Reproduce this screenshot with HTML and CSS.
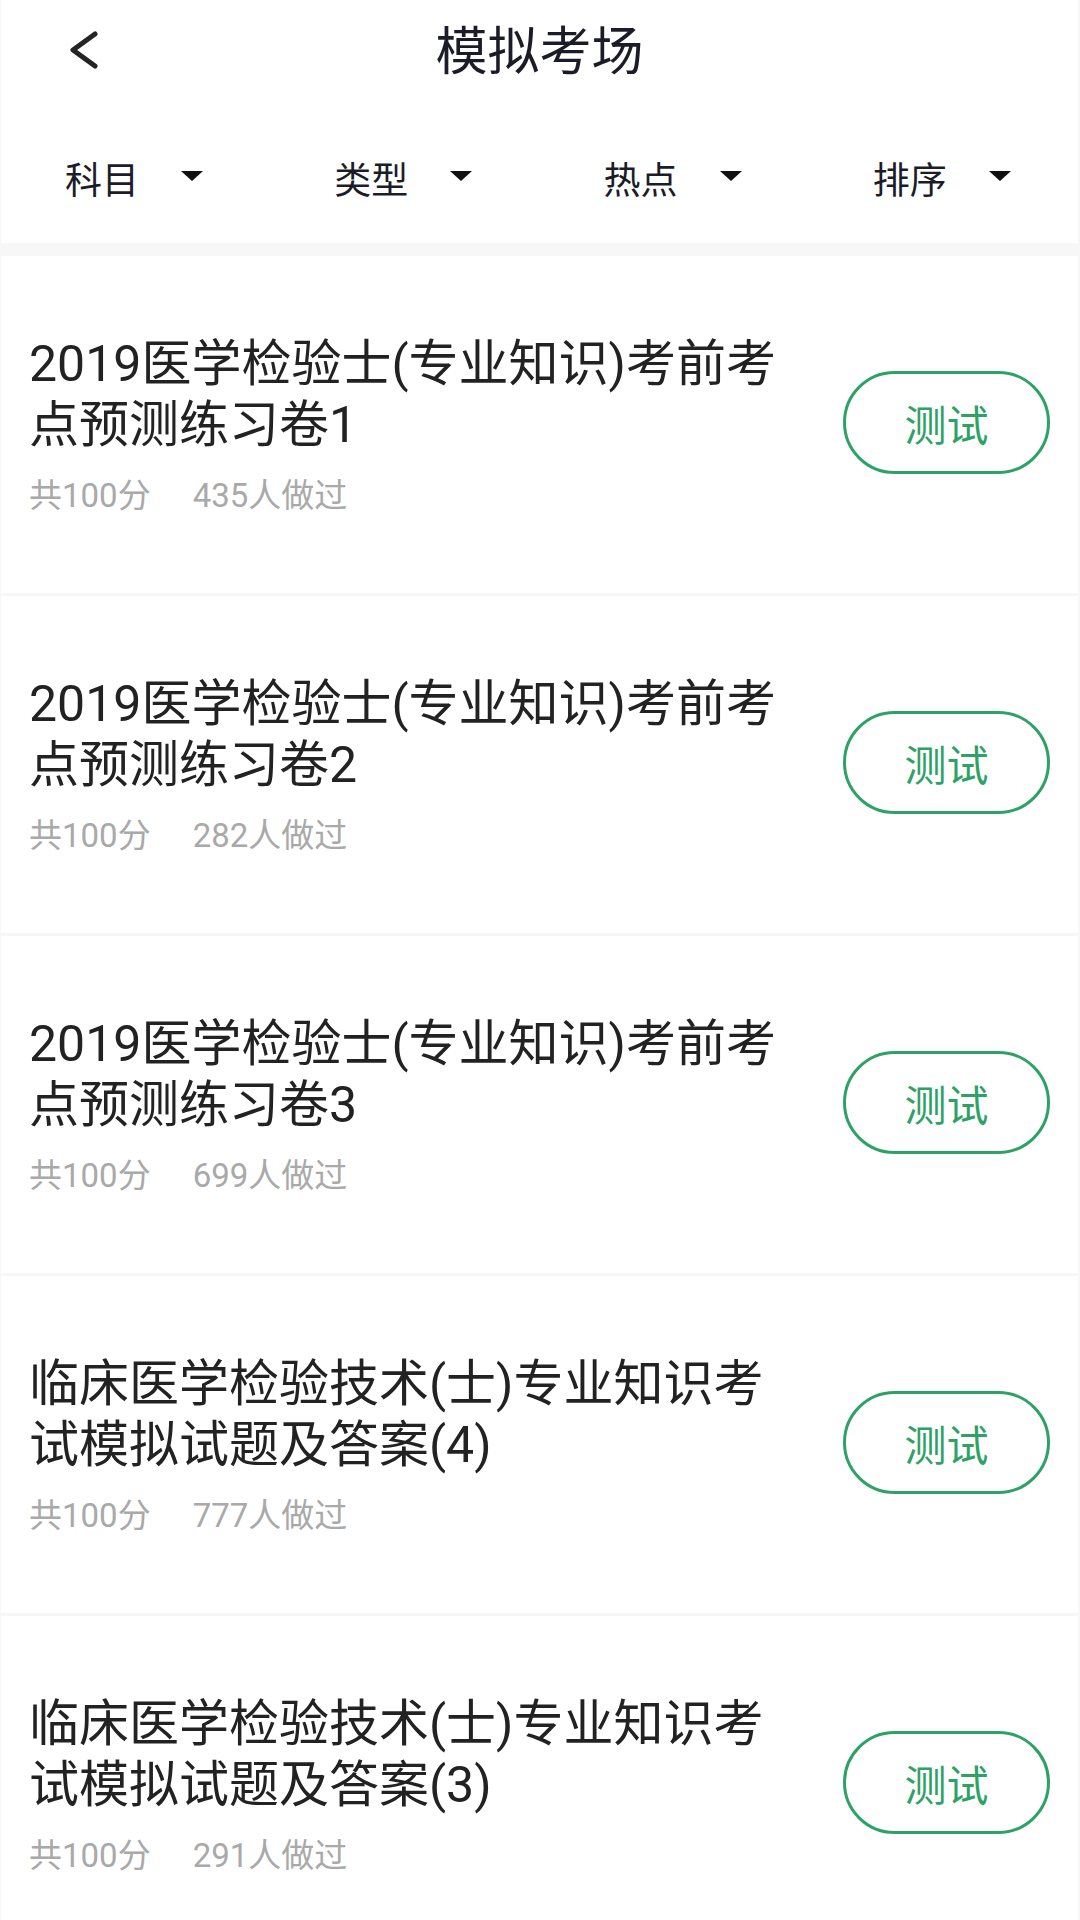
FILE: index.html
```html
<!DOCTYPE html>
<html lang="zh-CN">

<head>
    <meta charset="UTF-8">
    <meta name="viewport" content="width=device-width, initial-scale=1.0">
    <title>模拟考场</title>
    <link rel="stylesheet" href="styles.css">
</head>

<body>
    <div class="page">
        <div class="header">
            <div class="nav">
                <div class="back">
                    <svg width="40" height="50" viewBox="0 0 40 50">
                        <polyline points="31,6 9,22 31,38" fill="none" stroke="#242424" stroke-width="5"
                            stroke-linecap="round" stroke-linejoin="round" />
                    </svg>
                </div>
                <h1 class="title">模拟考场</h1>
                <div></div>
            </div>

            <div class="filters">
                <div class="filter"><span>科目</span><i class="arrow"></i></div>
                <div class="filter"><span>类型</span><i class="arrow"></i></div>
                <div class="filter"><span>热点</span><i class="arrow"></i></div>
                <div class="filter"><span>排序</span><i class="arrow"></i></div>
            </div>
        </div>

        <div class="list">
            <div class="exam">
                <div class="exam-info">
                    <p class="exam-name">2019医学检验士(专业知识)考前考点预测练习卷1</p>
                    <div class="exam-meta"><span>共100分</span><span>435人做过</span></div>
                </div>
                <button class="exam-btn">测试</button>
            </div>

            <div class="exam">
                <div class="exam-info">
                    <p class="exam-name">2019医学检验士(专业知识)考前考点预测练习卷2</p>
                    <div class="exam-meta"><span>共100分</span><span>282人做过</span></div>
                </div>
                <button class="exam-btn">测试</button>
            </div>

            <div class="exam">
                <div class="exam-info">
                    <p class="exam-name">2019医学检验士(专业知识)考前考点预测练习卷3</p>
                    <div class="exam-meta"><span>共100分</span><span>699人做过</span></div>
                </div>
                <button class="exam-btn">测试</button>
            </div>

            <div class="exam">
                <div class="exam-info">
                    <p class="exam-name">临床医学检验技术(士)专业知识考试模拟试题及答案(4)</p>
                    <div class="exam-meta"><span>共100分</span><span>777人做过</span></div>
                </div>
                <button class="exam-btn">测试</button>
            </div>

            <div class="exam">
                <div class="exam-info">
                    <p class="exam-name">临床医学检验技术(士)专业知识考试模拟试题及答案(3)</p>
                    <div class="exam-meta"><span>共100分</span><span>291人做过</span></div>
                </div>
                <button class="exam-btn">测试</button>
            </div>
        </div>
    </div>
</body>

</html>
```

FILE: styles.css
```css
body {
    margin: 0;
    background: #f7f7f7;
    font-family: Roboto, "Noto Sans CJK SC", sans-serif;
    height: 1920px;
    overflow: hidden;
}

.page {
    padding: 0 2px 0 1px;
}

.header {
    background: #fff;
    margin-bottom: 13px;
}

.nav {
    display: grid;
    grid-template-columns: 1fr auto 1fr;
    align-items: center;
    height: 106px;
}

.back {
    padding-left: 63px;
    display: flex;
    align-items: center;
}

.title {
    margin: 0;
    font-size: 52px;
    font-weight: normal;
    color: #1c1c28;
    line-height: 60px;
}

.filters {
    display: grid;
    grid-template-columns: repeat(4, 1fr);
    height: 137px;
    align-items: center;
    padding-top: 6px;
    box-sizing: border-box;
}

.filter {
    display: flex;
    align-items: center;
    padding-left: 64px;
    font-size: 37px;
    color: #1c1c28;
}

.arrow {
    width: 0;
    height: 0;
    margin-left: 42px;
    margin-top: -4px;
    border-left: 11px solid transparent;
    border-right: 11px solid transparent;
    border-top: 10px solid #111;
}

.exam {
    display: grid;
    grid-template-columns: 765px 207px;
    column-gap: 49px;
    align-items: center;
    height: 337px;
    margin-bottom: 3px;
    padding-left: 28px;
    background: #fff;
}

.exam-name {
    margin: 0;
    font-size: 50px;
    line-height: 61px;
    color: #222;
}

.exam-meta {
    margin-top: 20px;
    font-size: 33px;
    line-height: 40px;
    color: #a9a9a9;
}

.exam-meta span + span {
    margin-left: 42px;
}

.exam-btn {
    width: 207px;
    height: 103px;
    margin-top: -4px;
    border: 3px solid #2ea266;
    border-radius: 52px;
    background: #fff;
    color: #2ea266;
    font-family: inherit;
    font-size: 42px;
    padding: 0;
}
```
